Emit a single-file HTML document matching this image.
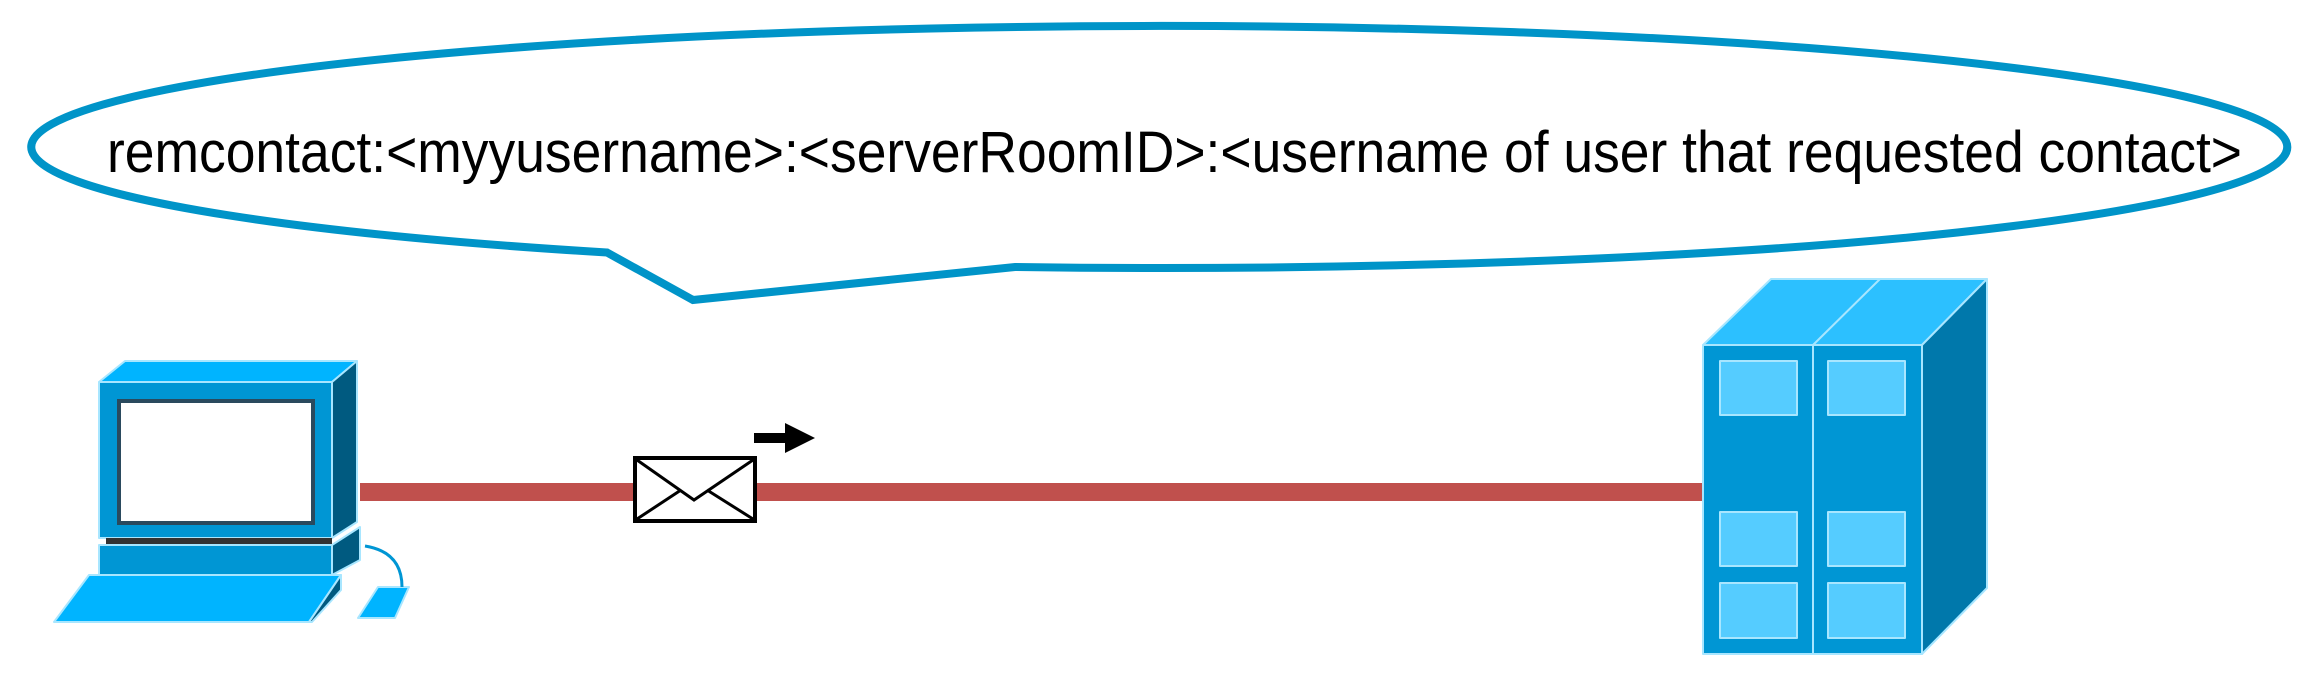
<!DOCTYPE html>
<html><head><meta charset="utf-8"><style>html,body{margin:0;padding:0;background:#fff;width:2311px;height:685px;overflow:hidden}</style></head>
<body>
<svg width="2311" height="685" viewBox="0 0 2311 685" xmlns="http://www.w3.org/2000/svg">
<!-- speech bubble -->
<path d="M607,252.5 L693,300 L1015,267 A1128,121 0 1 0 607,252.5 Z" fill="#fff" stroke="#0094c8" stroke-width="8" stroke-linejoin="miter"/>
<text x="107" y="172" font-family="Liberation Sans, sans-serif" font-size="58" textLength="2135" lengthAdjust="spacingAndGlyphs" fill="#000">remcontact:&lt;myyusername&gt;:&lt;serverRoomID&gt;:&lt;username of user that requested contact&gt;</text>

<!-- red link -->
<rect x="360" y="483" width="1345" height="18" fill="#c0504d"/>

<!-- envelope -->
<rect x="635" y="458" width="120" height="63" fill="#fff" stroke="#000" stroke-width="4"/>
<polyline points="637,460 694,500 753,460" fill="none" stroke="#000" stroke-width="3"/>
<line x1="637" y1="519" x2="681" y2="490" stroke="#000" stroke-width="3"/>
<line x1="753" y1="519" x2="707" y2="490" stroke="#000" stroke-width="3"/>
<!-- arrow -->
<rect x="754" y="433" width="33" height="10" fill="#000"/>
<polygon points="785,423 815,438 785,453" fill="#000"/>

<!-- computer -->
<g stroke="#a8e6ff" stroke-width="2" stroke-linejoin="round">
<polygon points="99,382 125,361 357,361 332,382" fill="#00b4ff"/>
<polygon points="332,382 357,361 357,522 332,538" fill="#005a80"/>
<rect x="99" y="382" width="233" height="156" fill="#0096d4"/>
<polygon points="332,545 360,527 360,560 332,575" fill="#005a80"/>
<rect x="99" y="545" width="233" height="30" fill="#0096d4"/>
<polygon points="54,622 89,575 341,575 309,622" fill="#00b4ff"/>
<polygon points="309,622 341,575 341,590 312,622" fill="#005a80"/>
<polygon points="358,618 378,587 409,587 395,618" fill="#00b4ff"/>
</g>
<rect x="106" y="538" width="226" height="6" fill="#333"/>
<rect x="119" y="401" width="194" height="122" fill="#fff" stroke="#2a4a5e" stroke-width="4"/>
<path d="M365,546 Q402,552 402,587" fill="none" stroke="#0096d4" stroke-width="3"/>

<!-- server -->
<g stroke="#a8e6ff" stroke-width="2" stroke-linejoin="round">
<polygon points="1703,345 1771,279 1987,279 1922,345" fill="#2cc0ff"/>
<line x1="1813" y1="345" x2="1880" y2="279"/>
<polygon points="1922,345 1987,279 1987,588 1922,654" fill="#0078ab"/>
<rect x="1703" y="345" width="219" height="309" fill="#0096d4"/>
<line x1="1813" y1="345" x2="1813" y2="654"/>
<rect x="1720" y="361" width="77" height="54" fill="#55ccff"/>
<rect x="1828" y="361" width="77" height="54" fill="#55ccff"/>
<rect x="1720" y="512" width="77" height="54" fill="#55ccff"/>
<rect x="1828" y="512" width="77" height="54" fill="#55ccff"/>
<rect x="1720" y="583" width="77" height="55" fill="#55ccff"/>
<rect x="1828" y="583" width="77" height="55" fill="#55ccff"/>
</g>
</svg>
</body></html>
